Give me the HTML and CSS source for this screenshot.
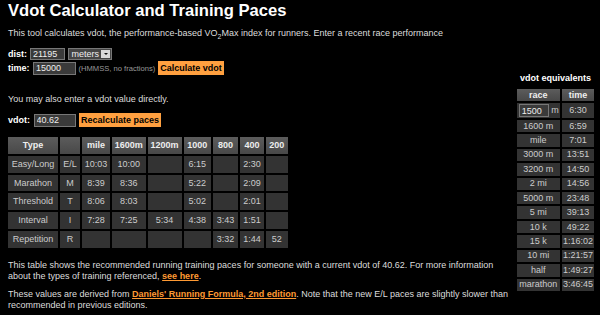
FILE: index.html
```
<!DOCTYPE html>
<html lang="en">
<head>
    <meta charset="UTF-8" />
    <title>Vdot Calculator and Training Paces</title>
    <link rel="stylesheet" href="styles.css">
</head>
<body>
<div class="page">
    <div class="main">
        <h1>Vdot Calculator and Training Paces</h1>
        <p class="intro">This tool calculates vdot, the performance-based VO<sub>2</sub>Max index for runners. Enter a recent race performance</p>

        <div class="row first">
            <label>dist:</label>
            <input type="text" class="dist" value="21195">
            <span class="select">meters<span class="arrow"></span></span>
        </div>
        <div class="row">
            <label>time:</label>
            <input type="text" class="wide" value="15000">
            <span class="hint">(HMMSS, no fractions)</span>
            <button>Calculate vdot</button>
        </div>

        <p class="direct">You may also enter a vdot value directly.</p>
        <div class="row">
            <label>vdot:</label>
            <input type="text" class="wide" value="40.62">
            <button>Recalculate paces</button>
        </div>

        <table class="paces">
            <tr>
                <th class="w-type">Type</th>
                <th class="w-code"></th>
                <th class="w-mile">mile</th>
                <th class="w-1600">1600m</th>
                <th class="w-1200">1200m</th>
                <th class="w-1000">1000</th>
                <th class="w-800">800</th>
                <th class="w-400">400</th>
                <th class="w-200">200</th>
            </tr>
            <tr><td>Easy/Long</td><td>E/L</td><td>10:03</td><td>10:00</td><td></td><td>6:15</td><td></td><td>2:30</td><td></td></tr>
            <tr><td>Marathon</td><td>M</td><td>8:39</td><td>8:36</td><td></td><td>5:22</td><td></td><td>2:09</td><td></td></tr>
            <tr><td>Threshold</td><td>T</td><td>8:06</td><td>8:03</td><td></td><td>5:02</td><td></td><td>2:01</td><td></td></tr>
            <tr><td>Interval</td><td>I</td><td>7:28</td><td>7:25</td><td>5:34</td><td>4:38</td><td>3:43</td><td>1:51</td><td></td></tr>
            <tr><td>Repetition</td><td>R</td><td></td><td></td><td></td><td></td><td>3:32</td><td>1:44</td><td>52</td></tr>
        </table>

        <p class="note">This table shows the recommended running training paces for someone with a current vdot of 40.62. For more information about the types of training referenced, <a href="#">see here</a>.</p>
        <p class="note2">These values are derived from <a href="#">Daniels' Running Formula, 2nd edition</a>. Note that the new E/L paces are slightly slower than recommended in previous editions.</p>
    </div>

    <aside class="side">
        <table class="equiv">
            <caption>vdot equivalents</caption>
            <tr><th class="w-race">race</th><th class="w-time">time</th></tr>
            <tr class="custom"><td><input type="text" class="race-in" value="1500"> m</td><td>6:30</td></tr>
            <tr><td>1600 m</td><td>6:59</td></tr>
            <tr><td>mile</td><td>7:01</td></tr>
            <tr><td>3000 m</td><td>13:51</td></tr>
            <tr><td>3200 m</td><td>14:50</td></tr>
            <tr><td>2 mi</td><td>14:56</td></tr>
            <tr><td>5000 m</td><td>23:48</td></tr>
            <tr><td>5 mi</td><td>39:13</td></tr>
            <tr><td>10 k</td><td>49:22</td></tr>
            <tr><td>15 k</td><td>1:16:02</td></tr>
            <tr><td>10 mi</td><td>1:21:57</td></tr>
            <tr><td>half</td><td>1:49:27</td></tr>
            <tr><td>marathon</td><td>3:46:45</td></tr>
        </table>
    </aside>
</div>
</body>
</html>
```

FILE: styles.css
```
body {
    margin: 0;
    padding: 1px 4px 0 8px;
    background: #000;
    color: #ddd;
    font-family: "Liberation Sans", Arial, sans-serif;
    font-size: 9px;
    line-height: 11px;
}
.page {
    display: flex;
    align-items: flex-start;
}
.main {
    width: 509px;
}
h1 {
    margin: 0;
    font-size: 16.6px;
    line-height: 19px;
    color: #fff;
}
p {
    margin: 0;
}
sub {
    font-size: 7px;
    line-height: 0;
}
.intro {
    margin-top: 8px;
}
.row {
    display: flex;
    align-items: center;
    gap: 3px;
    height: 14.3px;
}
.row.first {
    margin-top: 8px;
}
label {
    font-weight: bold;
    color: #fff;
}
input {
    box-sizing: border-box;
    height: 13px;
    margin: 0;
    padding: 0 2px;
    border: 1px solid #777;
    background: #3a3a3a;
    color: #eee;
    font-family: "Liberation Sans", Arial, sans-serif;
    font-size: 9px;
}
input.dist {
    width: 34.5px;
    height: 12.5px;
}
input.wide {
    width: 42.5px;
    margin-left: 0.5px;
}
.select {
    position: relative;
    box-sizing: border-box;
    width: 44.5px;
    height: 12.5px;
    padding: 0 0 0 3px;
    border: 1px solid #777;
    background: #444;
    color: #eee;
    line-height: 10.5px;
}
.select .arrow {
    position: absolute;
    right: 1px;
    top: 1px;
    width: 9px;
    height: 8.5px;
    background: #d8d8d8;
}
.select .arrow::after {
    content: "";
    position: absolute;
    left: 2.5px;
    top: 3px;
    border-left: 2px solid transparent;
    border-right: 2px solid transparent;
    border-top: 2.5px solid #111;
}
.hint {
    font-size: 7.6px;
    color: #999;
}
button {
    height: 14px;
    margin: 0;
    padding: 0 2px;
    border: none;
    border-radius: 0;
    background: #ffa040;
    color: #000;
    font-family: "Liberation Sans", Arial, sans-serif;
    font-size: 9px;
    font-weight: bold;
}
.direct {
    margin-top: 18px;
    margin-bottom: 8.5px;
}
table {
    border-collapse: separate;
}
.paces {
    margin: 8px 0 0 -2px;
    border-spacing: 2px;
}
.paces th, .paces td {
    box-sizing: border-box;
    height: 16.7px;
    padding: 0 2px;
    text-align: center;
    background: #333;
    color: #ccc;
    font-weight: normal;
}
.paces th, .equiv th {
    background: linear-gradient(#5c5c5c, #484848);
    color: #eee;
    font-weight: bold;
}
.w-type { width: 50px; }
.w-code { width: 20px; }
.w-mile { width: 28px; }
.w-1600 { width: 33.5px; }
.w-1200 { width: 34px; }
.w-1000 { width: 27.5px; }
.w-800 { width: 25px; }
.w-400 { width: 24px; }
.w-200 { width: 21.5px; }
.note {
    margin-top: 10px;
}
.note2 {
    margin-top: 7px;
}
a {
    color: #ff9a33;
    font-weight: bold;
}
.side {
    margin-top: 72px;
}
.equiv {
    border-spacing: 2px;
}
.equiv caption {
    padding-bottom: 3px;
    font-weight: bold;
    color: #fff;
}
.equiv th, .equiv td {
    box-sizing: border-box;
    height: 12.45px;
    padding: 0 1px;
    text-align: center;
    white-space: nowrap;
}
.equiv td {
    background: #333;
    color: #ccc;
}
.w-race { width: 41px; }
.w-time { width: 32.5px; }
.equiv .custom td {
    height: 14.4px;
}
.equiv .custom td:first-child {
    text-align: left;
    padding-left: 2px;
}
input.race-in {
    width: 30px;
    height: 12.4px;
    vertical-align: middle;
}
```
